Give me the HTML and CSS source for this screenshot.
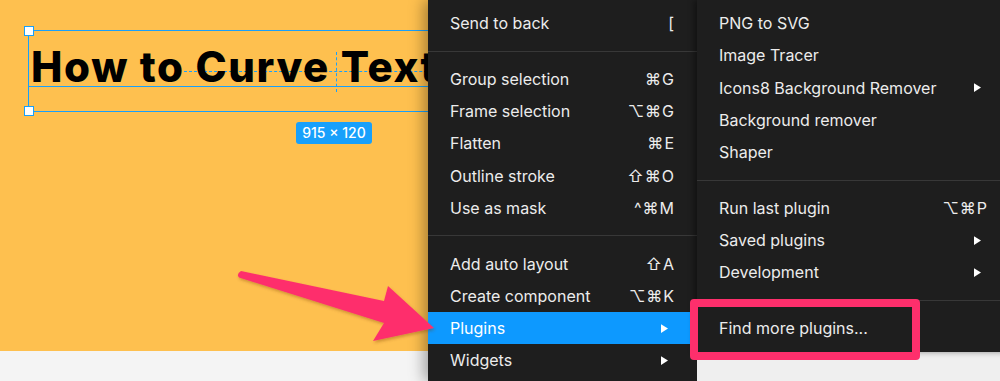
FILE: index.html
```html
<!DOCTYPE html>
<html lang="en">
<head>
    <meta charset="UTF-8">
    <title>Curve text - plugins menu</title>
    <link rel="stylesheet" href="styles.css">
</head>
<body>
    <div class="stage">
        <!-- canvas with the selected text layer -->
        <div class="canvas">
            <div class="frame">
                <div class="selection">
                    <span class="handle handle-top"></span>
                    <span class="handle handle-bottom"></span>
                    <span class="baseline"></span>
                    <span class="guide-h"></span>
                    <span class="guide-v"></span>
                    <h1 class="headline">How to Curve Text</h1>
                </div>
                <span class="size-badge">915 × 120</span>
            </div>
            <div class="floor"></div>
        </div>

        <!-- context menu -->
        <div class="menu">
            <div class="menu-item"><span>Send to back</span><span class="shortcut">[</span></div>
            <div class="menu-sep"></div>
            <div class="menu-item"><span>Group selection</span><span class="shortcut">⌘G</span></div>
            <div class="menu-item"><span>Frame selection</span><span class="shortcut">⌥⌘G</span></div>
            <div class="menu-item"><span>Flatten</span><span class="shortcut">⌘E</span></div>
            <div class="menu-item"><span>Outline stroke</span><span class="shortcut">⇧⌘O</span></div>
            <div class="menu-item"><span>Use as mask</span><span class="shortcut">^⌘M</span></div>
            <div class="menu-sep"></div>
            <div class="menu-item"><span>Add auto layout</span><span class="shortcut">⇧A</span></div>
            <div class="menu-item"><span>Create component</span><span class="shortcut">⌥⌘K</span></div>
            <div class="menu-item active"><span>Plugins</span><svg class="caret" viewBox="0 0 8 10"><polygon points="0,0 8,5 0,10"/></svg></div>
            <div class="menu-item"><span>Widgets</span><svg class="caret" viewBox="0 0 8 10"><polygon points="0,0 8,5 0,10"/></svg></div>
        </div>

        <!-- plugins submenu -->
        <div class="side">
            <div class="menu submenu">
                <div class="menu-item"><span>PNG to SVG</span></div>
                <div class="menu-item"><span>Image Tracer</span></div>
                <div class="menu-item"><span>Icons8 Background Remover</span><svg class="caret" viewBox="0 0 8 10"><polygon points="0,0 8,5 0,10"/></svg></div>
                <div class="menu-item"><span>Background remover</span></div>
                <div class="menu-item"><span>Shaper</span></div>
                <div class="menu-sep"></div>
                <div class="menu-item"><span>Run last plugin</span><span class="shortcut">⌥⌘P</span></div>
                <div class="menu-item"><span>Saved plugins</span><svg class="caret" viewBox="0 0 8 10"><polygon points="0,0 8,5 0,10"/></svg></div>
                <div class="menu-item"><span>Development</span><svg class="caret" viewBox="0 0 8 10"><polygon points="0,0 8,5 0,10"/></svg></div>
                <div class="menu-sep"></div>
                <div class="menu-item"><span>Find more plugins...</span></div>
            </div>
            <div class="panel"></div>
        </div>

        <!-- annotations drawn over the screenshot -->
        <div class="callout"></div>
        <svg class="pointer" width="220" height="90" viewBox="230 260 220 90">
            <defs>
                <filter id="drop" x="-10%" y="-20%" width="130%" height="150%">
                    <feDropShadow dx="1" dy="2" stdDeviation="1.5" flood-color="#7a3a00" flood-opacity="0.35"/>
                </filter>
            </defs>
            <path filter="url(#drop)" fill="#fe2f6c" d="M241 271 L384 301 L388 286 L434 328 L373 341 L384 323 L239 277.5 Q236 274 241 271 Z"/>
        </svg>
    </div>
</body>
</html>
```

FILE: styles.css
```css
body {
    margin: 0;
    background-color: #f4f4f4;
    font-family: 'Inter', 'DejaVu Sans', sans-serif;
    overflow: hidden;
}
.stage {
    position: relative;
    display: grid;
    grid-template-columns: 428px 269px 1fr;
    width: 1000px;
    height: 381px;
    overflow: hidden;
}
.canvas {
    display: flex;
    flex-direction: column;
}
.frame {
    position: relative;
    height: 351px;
    background-color: #fec04f;
}
.floor {
    flex: 1;
    background-color: #f4f4f4;
}
.selection {
    position: absolute;
    left: 28px;
    top: 30px;
    width: 950px;
    height: 82px;
    border: 1px solid #18a0fb;
    border-right: none;
    box-sizing: border-box;
}
.handle {
    position: absolute;
    left: -5px;
    width: 8px;
    height: 8px;
    background-color: #ffffff;
    border: 1px solid #18a0fb;
}
.handle-top {
    top: -5px;
}
.handle-bottom {
    bottom: -5px;
}
.baseline {
    position: absolute;
    left: 0;
    right: 0;
    top: 55px;
    border-top: 1px solid #18a0fb;
}
.guide-h {
    position: absolute;
    left: 155px;
    right: 0;
    top: 40px;
    border-top: 1px dashed #18a0fb;
}
.guide-v {
    position: absolute;
    left: 307px;
    top: 21px;
    height: 40px;
    border-left: 1px dashed #18a0fb;
}
.headline {
    margin: 0;
    padding: 12px 0 0 2px;
    font-family: 'Inter', sans-serif;
    font-weight: 800;
    font-size: 42px;
    line-height: 48px;
    letter-spacing: 1.6px;
    color: #000000;
    white-space: nowrap;
    position: relative;
}
.size-badge {
    position: absolute;
    left: 296px;
    top: 122px;
    width: 76px;
    height: 22px;
    line-height: 22px;
    text-align: center;
    border-radius: 3px;
    background-color: #18a0fb;
    color: #ffffff;
    font-size: 14px;
    font-weight: 500;
}
.menu {
    background-color: #1e1e1e;
    padding-top: 7px;
    box-shadow: -4px 0 14px rgba(0, 0, 0, 0.35);
    position: relative;
    z-index: 1;
}
.menu-item {
    display: flex;
    align-items: center;
    justify-content: space-between;
    height: 32.25px;
    padding: 0 22px;
    color: #ececec;
    font-size: 16px;
    white-space: nowrap;
}
.menu-item.active {
    background-color: #0d99ff;
    color: #ffffff;
}
.shortcut {
    letter-spacing: 1px;
}
.caret {
    width: 7px;
    height: 9px;
    margin-right: 7px;
    fill: #ffffff;
}
.menu-sep {
    height: 1px;
    margin: 11.25px 0;
    background-color: #383838;
}
.side {
    display: flex;
    flex-direction: column;
    width: 313px;
    position: relative;
    z-index: 2;
}
.submenu {
    padding-bottom: 8px;
    box-shadow: -3px 0 6px rgba(0, 0, 0, 0.4);
}
.panel {
    flex: 1;
    background-color: #efefef;
}
.callout {
    position: absolute;
    left: 690px;
    top: 299px;
    width: 214px;
    height: 45px;
    border: 8px solid #fe2f6c;
    border-radius: 4px;
    z-index: 3;
}
.pointer {
    position: absolute;
    left: 230px;
    top: 260px;
    z-index: 3;
}
```
